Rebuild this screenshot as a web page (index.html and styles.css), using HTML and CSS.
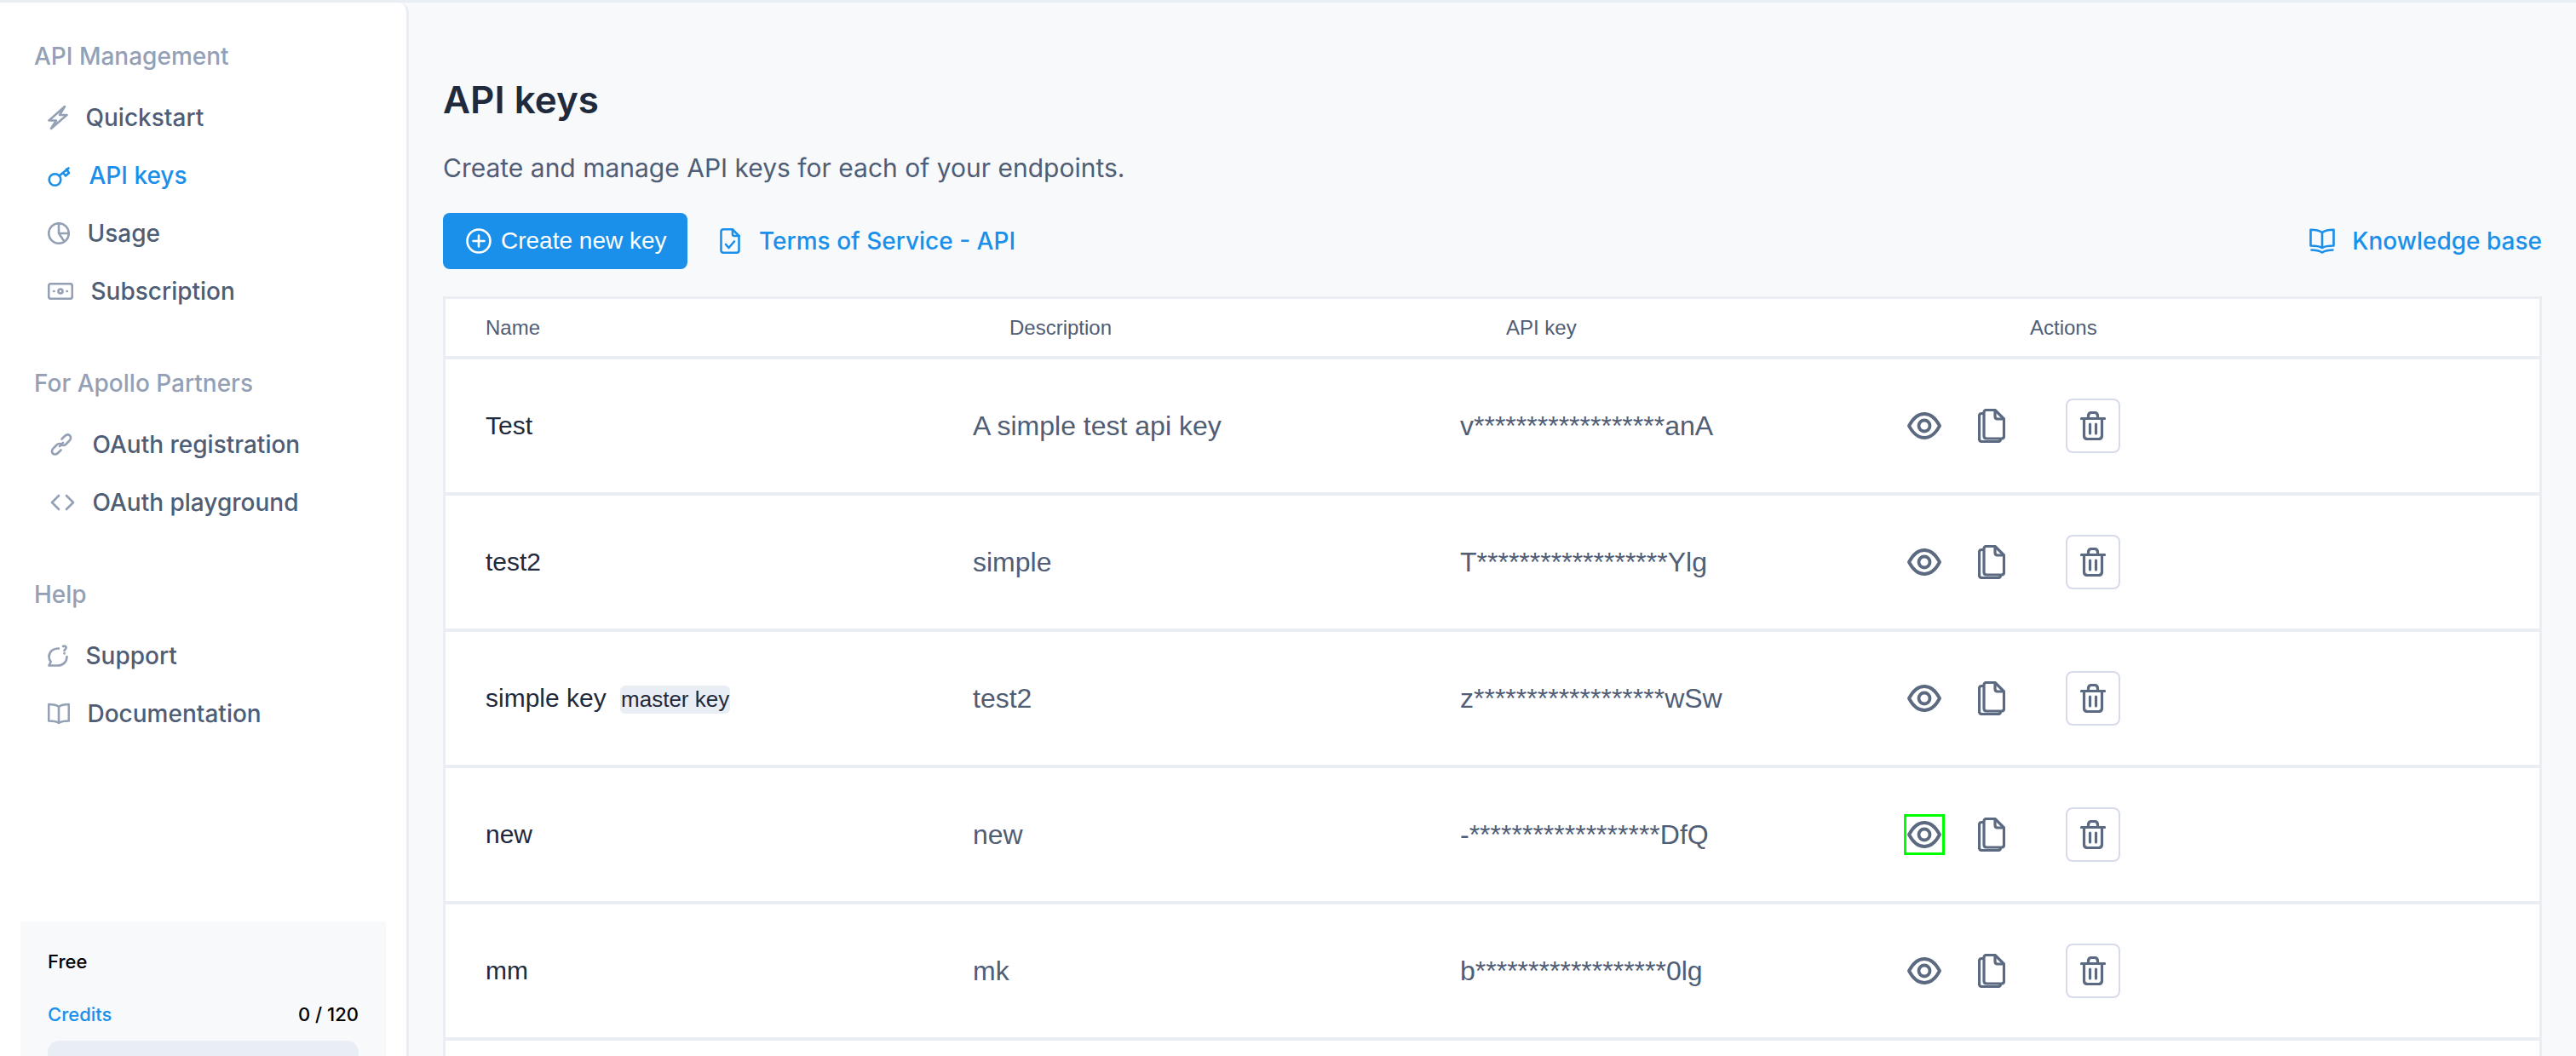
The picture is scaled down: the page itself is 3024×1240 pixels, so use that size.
FILE: index.html
```html
<!DOCTYPE html>
<html lang="en">
<head>
    <meta charset="UTF-8">
    <meta name="viewport" content="width=device-width, initial-scale=1.0">
    <title>API keys</title>
    <link rel="stylesheet" href="styles.css">
</head>
<body>
    <svg class="sprites" width="0" height="0">
        <symbol id="i-eye" viewBox="0 0 40 32" fill="none" stroke="currentColor" stroke-width="3.800" stroke-linejoin="round">
            <path d="M2 16C7 6.500 13 2 20 2s13 4.500 18 14c-5 9.500-11 14-18 14S7 25.500 2 16z"/>
            <circle cx="20" cy="16" r="6.500"/>
        </symbol>
        <symbol id="i-copy" viewBox="0 0 32 40" fill="none" stroke="currentColor" stroke-width="3.200" stroke-linejoin="round">
            <path d="M7 4.500c0-1.700 1-3 3-3h10l10.500 10.500v20c0 1.700-1 3-3 3H10c-2 0-3-1.300-3-3z"/>
            <path d="M20 1.500v7.500c0 2 1 3 3 3h7.500"/>
            <path d="M7 5.500H4.500c-2 0-3 1.300-3 3v27c0 1.700 1 3 3 3h19c2 0 3-1.300 3-3v-.500"/>
        </symbol>
        <symbol id="i-trash" viewBox="0 0 30 34" fill="none" stroke="currentColor" stroke-width="3.200" stroke-linecap="round" stroke-linejoin="round">
            <path d="M1.500 8.500h27"/>
            <path d="M4.500 8.500v20c0 2.500 1.500 4 4 4h13c2.500 0 4-1.500 4-4v-20"/>
            <path d="M9.500 8.500v-3c0-2.500 1.500-4 4-4h3c2.500 0 4 1.500 4 4v3"/>
            <path d="M11.500 15v11M18.500 15v11"/>
        </symbol>
    </svg>

    <div class="layout">
        <aside class="sidebar">
            <div class="nav-group">
                <h3 class="nav-title">API Management</h3>
                <a class="nav-item">
                    <svg class="nav-icon" width="24" height="30" viewBox="0 0 24 30"><path d="M20 2 1.500 18.500H10L4 28 22.500 12H14z"/></svg>
                    Quickstart
                </a>
                <a class="nav-item active">
                    <svg class="nav-icon" width="28" height="28" viewBox="0 0 28 28"><circle cx="8.500" cy="19" r="6.800"/><path d="m13.500 14.500 11-9M18 11l3 3.500 4-3.500-3-4.500"/></svg>
                    API keys
                </a>
                <a class="nav-item">
                    <svg class="nav-icon" width="26" height="26" viewBox="0 0 26 26"><circle cx="13" cy="13" r="11.800"/><path d="M13 1.500V13h11.500M13 13l6.500 9.500"/></svg>
                    Usage
                </a>
                <a class="nav-item">
                    <svg class="nav-icon" width="30" height="20" viewBox="0 0 30 20"><rect x="1.200" y="1.200" width="27.600" height="17.600" rx="2.500"/><circle cx="15" cy="10" r="2.500"/><path d="M7 10h.5M22.500 10h.5"/></svg>
                    Subscription
                </a>
            </div>

            <div class="nav-group">
                <h3 class="nav-title">For Apollo Partners</h3>
                <a class="nav-item">
                    <svg class="nav-icon oauth-icon wide-gap" width="26" height="26" viewBox="0 0 26 26"><path d="m11 15 4-4"/><path d="m13.500 6.500 3-3c2.500-2.500 5-2.500 6.500-1s1.500 4.500-1 6.500l-3.500 3.500c-2 2-4.500 2-6 .5"/><path d="m12.500 19.500-3 3c-2.500 2.500-5 2.500-6.500 1s-1.500-4.500 1-6.500l3.500-3.500c2-2 4.500-2 6-.5"/></svg>
                    OAuth registration
                </a>
                <a class="nav-item">
                    <svg class="nav-icon oauth-icon" width="29" height="20" viewBox="0 0 29 20"><path d="M10 2 2 10l8 8M19 2l8 8-8 8"/></svg>
                    OAuth playground
                </a>
            </div>

            <div class="nav-group">
                <h3 class="nav-title">Help</h3>
                <a class="nav-item">
                    <svg class="nav-icon" width="24" height="26" viewBox="0 0 24 26"><path d="M13 4.500C7 4 1.500 8 1.500 14c0 2.500.8 4.500 2.200 6L1.500 24.500H12c6 0 10.500-4.500 10.500-10.500"/><path d="M18 2c2-1 4 0 3.500 2s-2 1.500-2 3M19.500 10v.5"/></svg>
                    Support
                </a>
                <a class="nav-item">
                    <svg class="nav-icon" width="26" height="26" viewBox="0 0 26 26"><path d="M13 5C10 2.500 6 2 1.200 2v19.500c5 0 8.800.3 11.800 2.500 3-2.200 6.800-2.500 11.800-2.500V2C20 2 16 2.500 13 5zM13 5v19"/></svg>
                    Documentation
                </a>
            </div>

            <div class="plan-card">
                <div class="plan-name">Free</div>
                <div class="plan-row">
                    <span class="plan-link">Credits</span>
                    <span>0 / 120</span>
                </div>
                <div class="plan-bar"></div>
            </div>
        </aside>

        <main class="main">
            <h1>API keys</h1>
            <p class="subtitle">Create and manage API keys for each of your endpoints.</p>

            <div class="toolbar">
                <button class="primary-btn">
                    <svg width="30" height="30" viewBox="0 0 30 30" fill="none" stroke="currentColor" stroke-width="2.600" stroke-linecap="round"><circle cx="15" cy="15" r="13.500"/><path d="M15 8.500v13M8.500 15h13"/></svg>
                    Create new key
                </button>
                <a class="link terms-link">
                    <svg width="24" height="30" viewBox="0 0 24 30" fill="none" stroke="currentColor" stroke-width="2.600" stroke-linecap="round" stroke-linejoin="round"><path d="M1.500 4c0-1.700 1-2.700 2.700-2.700H15L22.500 9v17c0 1.700-1 2.700-2.700 2.700H4.200c-1.700 0-2.700-1-2.700-2.700z"/><path d="M15 1.500V7c0 1.300.7 2 2 2h5.500"/><path d="m7 19 3.500 4 6.500-7.500"/></svg>
                    Terms of Service - API
                </a>
                <a class="link kb-link">
                    <svg width="30" height="30" viewBox="0 0 30 30" fill="none" stroke="currentColor" stroke-width="2.600" stroke-linejoin="round"><path d="M15 5C11.500 2.500 7 1.800 1.500 1.800v18.700c5.500 0 10 .5 13.500 2.500 3.500-2 8-2.500 13.500-2.500V1.800C23 1.800 18.500 2.500 15 5zM15 5v18"/><path d="M1.500 25.500c5 0 9.500.5 13.500 3 4-2.500 8.500-3 13.500-3"/></svg>
                    Knowledge base
                </a>
            </div>

            <div class="keys-table">
                <div class="table-head">
                    <div>Name</div>
                    <div>Description</div>
                    <div>API key</div>
                    <div>Actions</div>
                </div>

                <div class="table-row">
                    <div class="cell-name">Test</div>
                    <div>A simple test api key</div>
                    <div>v******************anA</div>
                    <div class="actions">
                        <button class="icon-btn"><svg class="eye"><use href="#i-eye"/></svg></button>
                        <button class="icon-btn copy-btn"><svg class="copy"><use href="#i-copy"/></svg></button>
                        <button class="trash-btn"><svg class="trash"><use href="#i-trash"/></svg></button>
                    </div>
                </div>
                <div class="table-row">
                    <div class="cell-name">test2</div>
                    <div>simple</div>
                    <div>T******************Ylg</div>
                    <div class="actions">
                        <button class="icon-btn"><svg class="eye"><use href="#i-eye"/></svg></button>
                        <button class="icon-btn copy-btn"><svg class="copy"><use href="#i-copy"/></svg></button>
                        <button class="trash-btn"><svg class="trash"><use href="#i-trash"/></svg></button>
                    </div>
                </div>
                <div class="table-row">
                    <div class="cell-name">simple key <span class="badge">master key</span></div>
                    <div>test2</div>
                    <div>z******************wSw</div>
                    <div class="actions">
                        <button class="icon-btn"><svg class="eye"><use href="#i-eye"/></svg></button>
                        <button class="icon-btn copy-btn"><svg class="copy"><use href="#i-copy"/></svg></button>
                        <button class="trash-btn"><svg class="trash"><use href="#i-trash"/></svg></button>
                    </div>
                </div>
                <div class="table-row">
                    <div class="cell-name">new</div>
                    <div>new</div>
                    <div>-******************DfQ</div>
                    <div class="actions">
                        <button class="icon-btn focused"><svg class="eye"><use href="#i-eye"/></svg></button>
                        <button class="icon-btn copy-btn"><svg class="copy"><use href="#i-copy"/></svg></button>
                        <button class="trash-btn"><svg class="trash"><use href="#i-trash"/></svg></button>
                    </div>
                </div>
                <div class="table-row">
                    <div class="cell-name">mm</div>
                    <div>mk</div>
                    <div>b******************0lg</div>
                    <div class="actions">
                        <button class="icon-btn"><svg class="eye"><use href="#i-eye"/></svg></button>
                        <button class="icon-btn copy-btn"><svg class="copy"><use href="#i-copy"/></svg></button>
                        <button class="trash-btn"><svg class="trash"><use href="#i-trash"/></svg></button>
                    </div>
                </div>
                <div class="table-row"></div>
            </div>
        </main>
    </div>
</body>
</html>
```

FILE: styles.css
```css
* {
    box-sizing: border-box;
}

body {
    margin: 0;
    height: 1240px;
    overflow: hidden;
    font-family: Inter, "Noto Sans", sans-serif;
    background-color: #f8f9fb;
    border-top: 3px solid #e9edf4;
}

.sprites {
    position: absolute;
}

.layout {
    display: flex;
    height: 1237px;
    overflow: hidden;
}

/* sidebar */
.sidebar {
    width: 480px;
    flex-shrink: 0;
    padding-top: 45px;
    background-color: white;
    border-right: 3px solid #e9edf4;
    border-top-right-radius: 12px;
    overflow: hidden;
}

.nav-group {
    margin-bottom: 56px;
}

.nav-title {
    margin: 0 0 20px 40px;
    height: 36px;
    line-height: 36px;
    font-size: 28px;
    font-weight: 500;
    color: #94a0b5;
}

.nav-item {
    display: flex;
    align-items: center;
    gap: 20.500px;
    height: 68px;
    padding-left: 56px;
    font-size: 28px;
    font-weight: 500;
    color: #4f5d75;
}

.nav-item.active {
    color: #1a90ea;
}

.nav-icon {
    flex-shrink: 0;
    fill: none;
    stroke: #94a0b5;
    stroke-width: 2.600;
    stroke-linecap: round;
    stroke-linejoin: round;
}

.oauth-icon {
    margin-left: 3px;
}

.wide-gap {
    margin-right: 3px;
}

.nav-item.active .nav-icon {
    stroke: #1a90ea;
}

.plan-card {
    margin: 210px 24px 0;
    padding: 33px 32px 0;
    height: 240px;
    background-color: #f8f9fb;
    font-size: 22px;
    font-weight: 500;
    color: black;
}

.plan-name {
    line-height: 28px;
    margin-bottom: 34px;
}

.plan-row {
    display: flex;
    justify-content: space-between;
    line-height: 28px;
    margin-bottom: 17px;
}

.plan-link {
    color: #1a90ea;
}

.plan-bar {
    height: 60px;
    border-radius: 14px;
    background-color: #e9edf4;
}

/* main area */
.main {
    flex-grow: 1;
    padding: 0 40px;
    overflow: hidden;
}

h1 {
    margin: 90px 0 0;
    font-size: 44px;
    line-height: 48px;
    font-weight: 600;
    color: #1f2a3d;
}

.subtitle {
    margin: 36px 0 0;
    font-size: 30px;
    line-height: 40px;
    color: #4f5d75;
}

.toolbar {
    display: flex;
    align-items: center;
    margin-top: 33px;
    height: 66px;
}

.primary-btn {
    display: flex;
    align-items: center;
    gap: 11px;
    width: 287px;
    height: 66px;
    padding: 0 0 0 27px;
    border: none;
    border-radius: 8px;
    background-color: #1a90ea;
    color: white;
    font-family: "Liberation Sans", Arial, sans-serif;
    font-size: 28px;
}

.link {
    display: flex;
    align-items: center;
    color: #1a90ea;
    font-size: 28px;
    font-weight: 500;
}

.terms-link {
    margin-left: 38px;
    gap: 22px;
}

.kb-link {
    margin-left: auto;
    gap: 20px;
}

/* table */
.keys-table {
    margin-top: 32px;
    background-color: white;
    border: solid #e9edf4;
    border-width: 3px 3px 0;
    font-family: "Liberation Sans", Arial, sans-serif;
}

.table-head {
    display: grid;
    grid-template-columns: 615px 583px 615px 1fr;
    align-items: center;
    height: 71px;
    padding-left: 47px;
    font-size: 24px;
    color: #4f5d75;
    border-bottom: 4px solid #e9edf4;
}

.table-row {
    display: grid;
    grid-template-columns: 572px 572px 524px 1fr;
    align-items: center;
    height: 160px;
    padding-left: 47px;
    font-size: 32px;
    color: #4f5d75;
    border-bottom: 4px solid #e9edf4;
}

.cell-name {
    font-size: 30px;
    color: #1f2a3d;
}

.badge {
    display: inline-block;
    margin-left: 8px;
    padding: 0 1px;
    height: 33px;
    line-height: 33px;
    font-size: 26px;
    border-radius: 6px;
    background-color: #e9edf4;
}

.actions {
    display: flex;
    align-items: center;
    color: #5b6a80;
}

.icon-btn {
    display: flex;
    align-items: center;
    justify-content: center;
    padding: 0;
    width: 42px;
    height: 42px;
    border: none;
    background: none;
    color: inherit;
}

.icon-btn.focused {
    outline: 3px solid #00ff00;
}

.copy-btn {
    margin-left: 41px;
    width: 34px;
}

.trash-btn {
    display: flex;
    align-items: center;
    justify-content: center;
    margin-left: 70px;
    padding: 0;
    width: 64px;
    height: 64px;
    background: white;
    border: 2px solid #d5dce8;
    border-radius: 8px;
    color: inherit;
}

.eye {
    width: 40px;
    height: 32px;
}

.copy {
    width: 32px;
    height: 40px;
}

.trash {
    width: 30px;
    height: 34px;
}
```
